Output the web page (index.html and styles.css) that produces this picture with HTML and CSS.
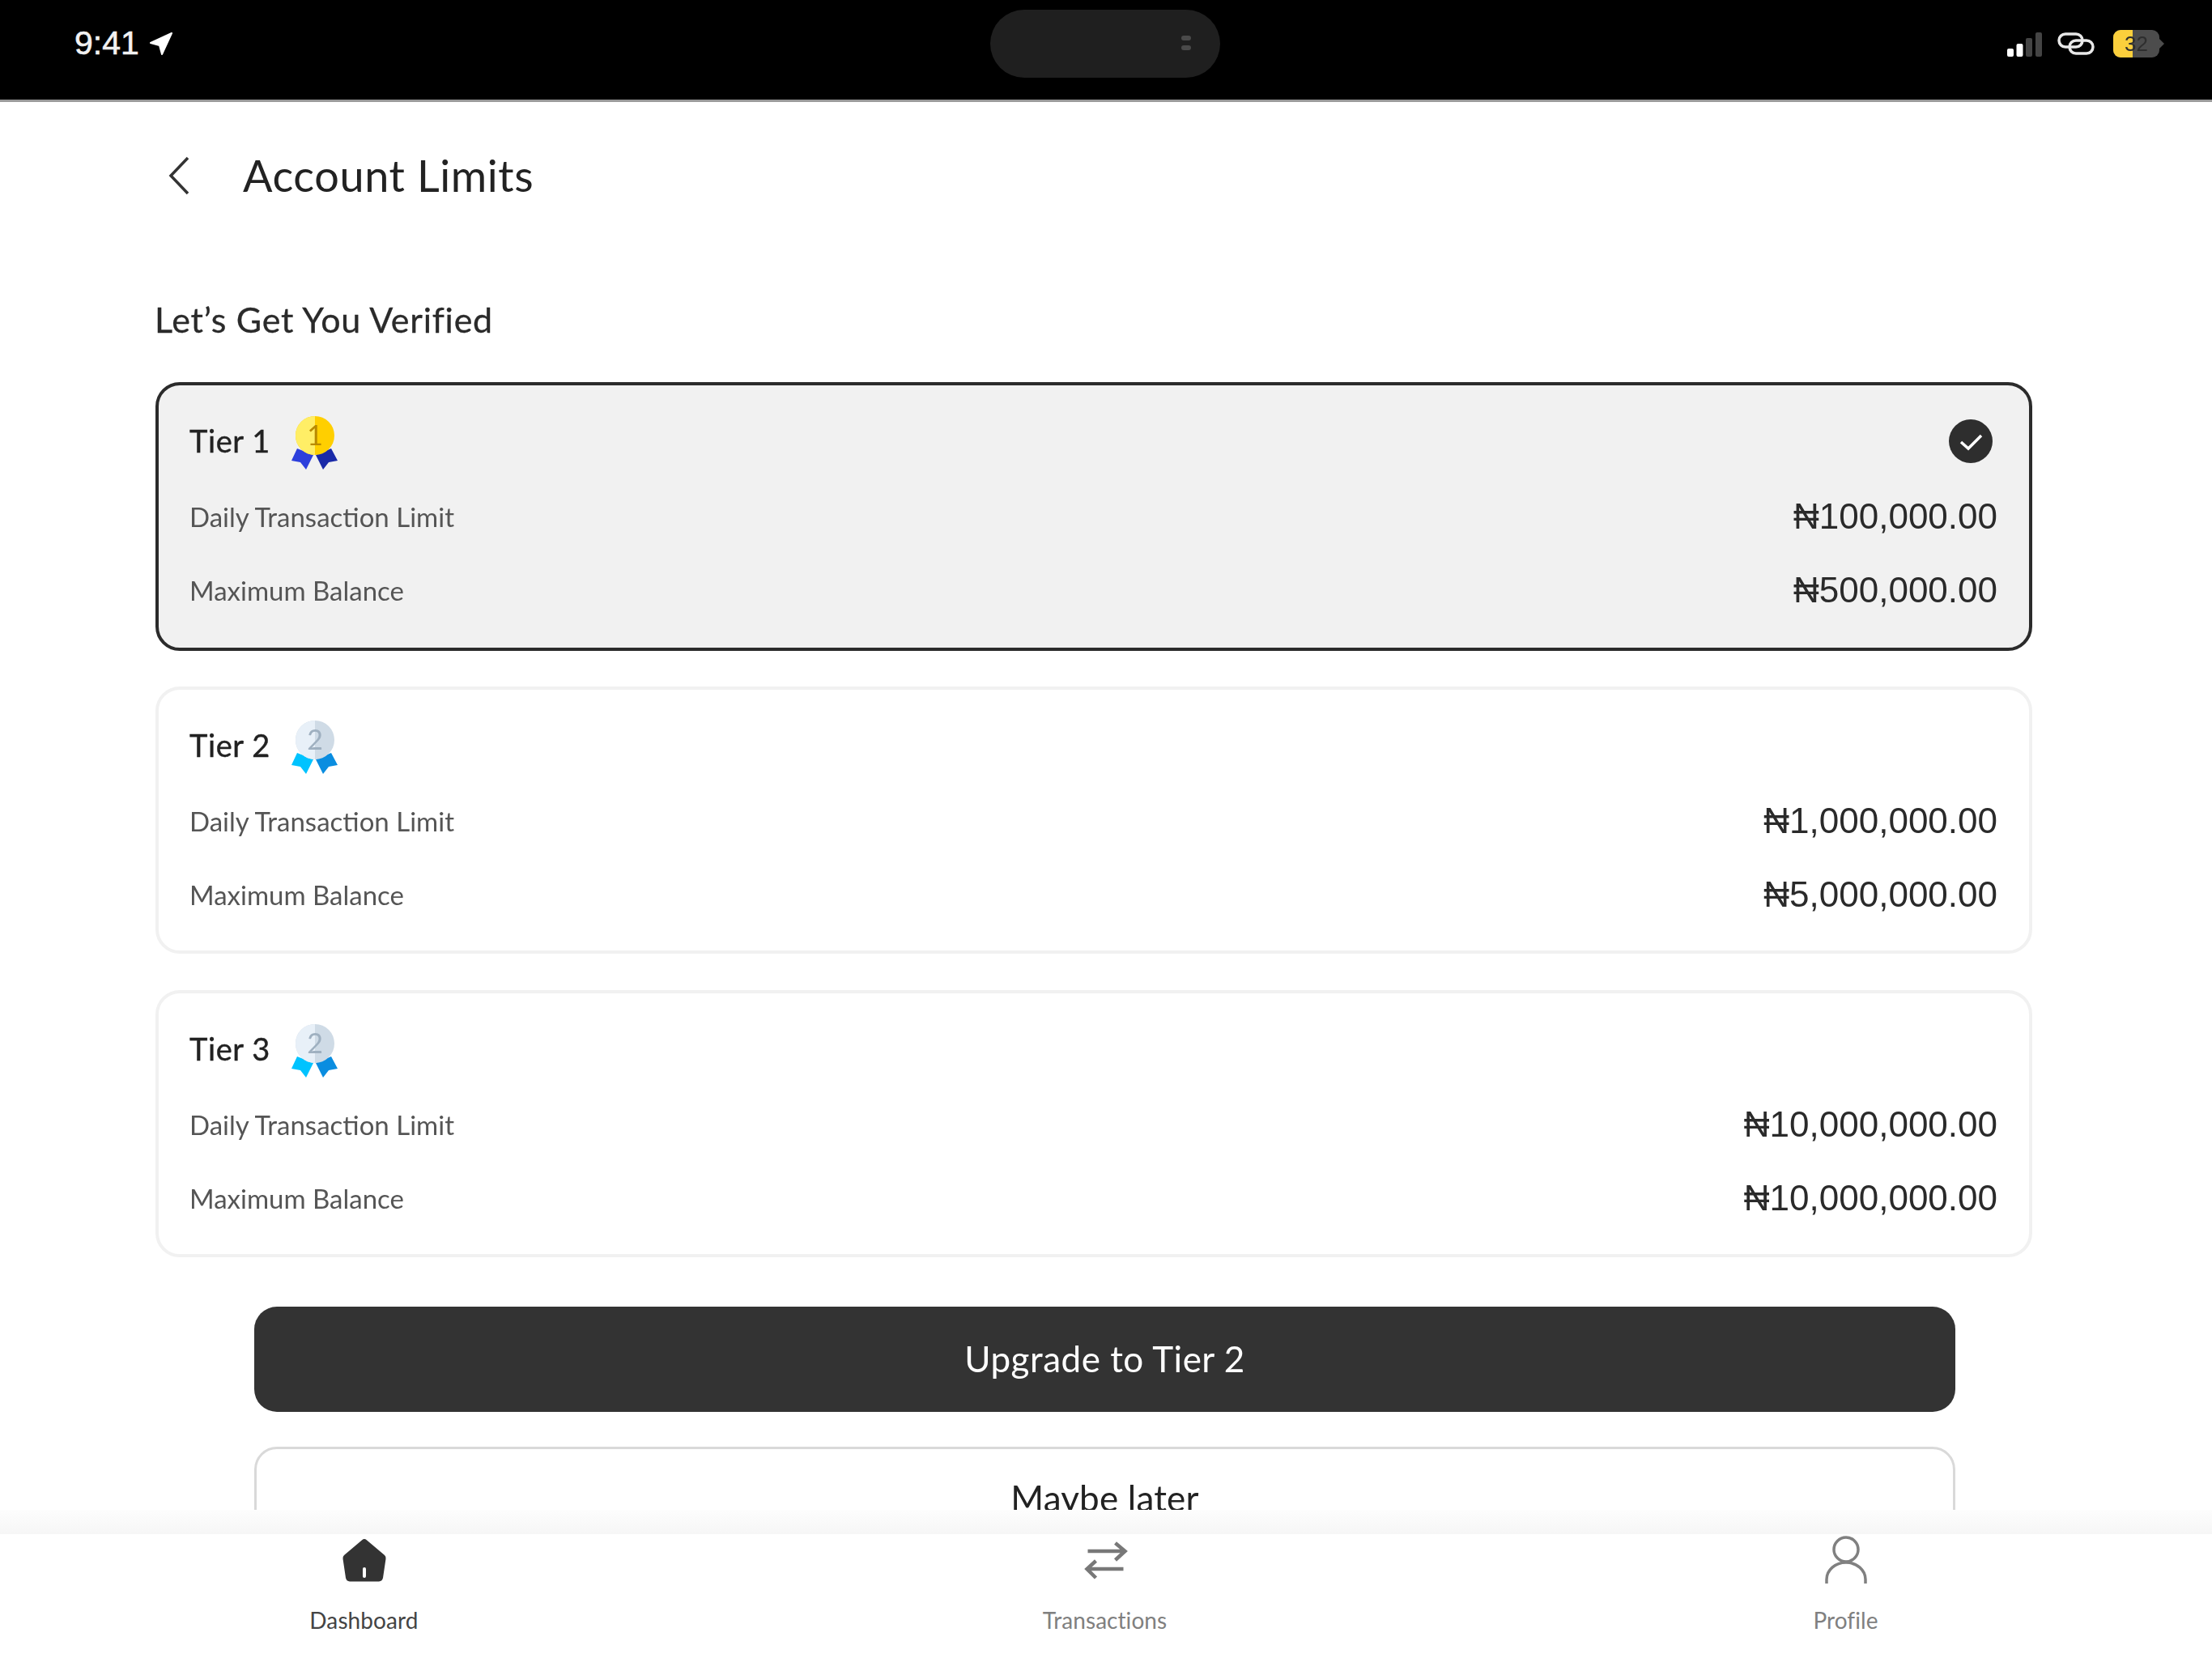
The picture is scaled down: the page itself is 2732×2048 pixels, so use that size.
FILE: index.html
```html
<!DOCTYPE html>
<html lang="en">
<head>
<meta charset="utf-8">
<title>Account Limits</title>
<link rel="stylesheet" href="styles.css">
</head>
<body>
<div class="status">
  <div class="status-left">
    <span class="time">9:41</span>
    <svg class="loc" viewBox="0 0 28 28"><path d="M27 1 1 13l11 3 3 11z" fill="#fff" stroke="#fff" stroke-width="2" stroke-linejoin="round"/></svg>
  </div>
  <div class="island"><i></i><i></i></div>
  <div class="status-right">
    <svg class="signal" viewBox="0 0 43 30"><rect x="0" y="20" width="8" height="10" rx="2" fill="#fff"/><rect x="11.500" y="14" width="8" height="16" rx="2" fill="#fff"/><rect x="23" y="7" width="8" height="23" rx="2" fill="#444"/><rect x="35" y="0" width="8" height="30" rx="2" fill="#444"/></svg>
    <svg class="link" viewBox="0 0 46 28"><g fill="none" stroke="#e8e8e8" stroke-width="3.500"><rect x="2" y="2" width="29" height="16" rx="8"/><rect x="15" y="10" width="29" height="16" rx="8"/></g></svg>
    <div class="battery"><div class="battery-body"><span class="battery-fill"></span><span class="battery-num">32</span></div><span class="battery-nub"></span></div>
  </div>
</div>

<main class="content">
  <header class="topbar">
    <svg class="back" viewBox="0 0 26 48"><path d="M24 2 3 24l21 22" fill="none" stroke="#333" stroke-width="3.500"/></svg>
    <h1 class="title">Account Limits</h1>
  </header>
  <h2 class="heading">Let’s Get You Verified</h2>

  <section class="card card-active">
    <div class="card-head">
      <span class="tier">Tier 1</span>
      <svg class="medal" viewBox="0 0 58 66"><path d="M7 40 0 55l11 2 7 9 9-18z" fill="#2c3fdc"/><path d="M49 40l8 15-11 2-7 9-9-18z" fill="#1a2aa8"/><circle cx="29" cy="24" r="24" fill="#ffcf00"/><path d="M29 0a24 24 0 0 0 0 48z" fill="#ffee66"/><text x="29" y="36" class="medal-num medal-num-gold">1</text></svg>
      <span class="check"><svg viewBox="0 0 54 54"><path d="M15 28l9 8 16-16" fill="none" stroke="#fff" stroke-width="3.500"/></svg></span>
    </div>
    <div class="row"><span class="label">Daily Transaction Limit</span><span class="value">₦100,000.00</span></div>
    <div class="row"><span class="label">Maximum Balance</span><span class="value">₦500,000.00</span></div>
  </section>

  <section class="card">
    <div class="card-head">
      <span class="tier">Tier 2</span>
      <svg class="medal" viewBox="0 0 58 66"><path d="M7 40 0 55l11 2 7 9 9-18z" fill="#00c3ff"/><path d="M49 40l8 15-11 2-7 9-9-18z" fill="#0a8de0"/><circle cx="29" cy="24" r="24" fill="#cfdbe6"/><path d="M29 0a24 24 0 0 0 0 48z" fill="#e8f0f8"/><text x="29" y="36" class="medal-num medal-num-silver">2</text></svg>
    </div>
    <div class="row"><span class="label">Daily Transaction Limit</span><span class="value">₦1,000,000.00</span></div>
    <div class="row"><span class="label">Maximum Balance</span><span class="value">₦5,000,000.00</span></div>
  </section>

  <section class="card">
    <div class="card-head">
      <span class="tier">Tier 3</span>
      <svg class="medal" viewBox="0 0 58 66"><path d="M7 40 0 55l11 2 7 9 9-18z" fill="#00c3ff"/><path d="M49 40l8 15-11 2-7 9-9-18z" fill="#0a8de0"/><circle cx="29" cy="24" r="24" fill="#cfdbe6"/><path d="M29 0a24 24 0 0 0 0 48z" fill="#e8f0f8"/><text x="29" y="36" class="medal-num medal-num-silver">2</text></svg>
    </div>
    <div class="row"><span class="label">Daily Transaction Limit</span><span class="value">₦10,000,000.00</span></div>
    <div class="row"><span class="label">Maximum Balance</span><span class="value">₦10,000,000.00</span></div>
  </section>

  <button class="btn btn-primary">Upgrade to Tier 2</button>
  <button class="btn btn-secondary">Maybe later</button>
</main>

<nav class="nav">
  <div class="nav-shade"></div>
  <div class="nav-items">
    <div class="nav-item nav-active">
      <svg class="nav-icon" viewBox="0 0 60 60"><path d="M30 4a4 4 0 0 0-2.500 1L5 24a5 5 0 0 0-1.500 4.500L7 52a5.500 5.500 0 0 0 5 4.500h36a5.500 5.500 0 0 0 5-4.500l3.500-23.500A5 5 0 0 0 55 24L32.500 5A4 4 0 0 0 30 4z" fill="#333"/><rect x="28" y="39" width="4" height="13" rx="2" fill="#fff"/></svg>
      <span class="nav-label">Dashboard</span>
    </div>
    <div class="nav-item">
      <svg class="nav-icon" viewBox="0 0 60 60"><g fill="none" stroke="#787878" stroke-width="4.500"><path d="M8.500 19h46M42.500 9l12 10-12 11"/><path d="M52.500 41h-45M18.500 31 7.500 41l11 11"/></g></svg>
      <span class="nav-label">Transactions</span>
    </div>
    <div class="nav-item">
      <svg class="nav-icon" viewBox="0 0 60 60"><g fill="none" stroke="#808080" stroke-width="3.500"><circle cx="30" cy="17" r="15"/><path d="M6 59V54a24 21 0 0 1 48 0v5"/></g></svg>
      <span class="nav-label">Profile</span>
    </div>
  </div>
</nav>
</body>
</html>
```
FILE: styles.css
```css
* { box-sizing: border-box; }
html, body { margin: 0; padding: 0; }
body {
  width: 2732px;
  height: 2048px;
  overflow: hidden;
  background: #fff;
  display: flex;
  flex-direction: column;
  font-family: "Lato", "Noto Sans", sans-serif;
  color: #222;
  filter: blur(0.6px);
}

.status {
  height: 126px;
  flex: none;
  background: #000;
  border-bottom: 3px solid #9a9a9a;
  display: grid;
  grid-template-columns: 1223px 284px 1fr;
}
.status-left { display: flex; align-items: flex-start; padding: 30px 0 0 92px; gap: 13px; }
.time { font: 41px/46px "Liberation Sans", sans-serif; color: #f2f2f2; -webkit-text-stroke: 0.6px #f2f2f2; }
.loc { width: 28px; height: 28px; margin-top: 10px; }
.island {
  margin-top: 12px;
  height: 84px;
  border-radius: 42px;
  background: #1f1f1f;
  display: flex;
  flex-direction: column;
  align-items: flex-end;
  gap: 6px;
  padding: 32px 36px 0 0;
}
.island i { width: 12px; height: 6px; border-radius: 3px; background: #4a4a4a; }
.status-right { display: flex; align-items: flex-start; justify-content: flex-end; padding: 37px 59px 0 0; }
.signal { width: 43px; height: 30px; margin-top: 3px; margin-right: 19px; }
.link { width: 46px; height: 28px; margin-top: 3px; margin-right: 23px; }
.battery { display: flex; align-items: center; height: 34px; }
.battery-body {
  width: 57px;
  height: 34px;
  border-radius: 9px;
  background: #4c4c4c;
  overflow: hidden;
  display: flex;
  align-items: center;
  justify-content: center;
  position: relative;
}
.battery-fill { position: absolute; left: 0; top: 0; bottom: 0; width: 24px; background: #fbcf3c; }
.battery-num { position: relative; font: 26px/34px "Liberation Sans", sans-serif; color: #2e2e2e; }
.battery-nub { width: 0; height: 0; border-left: 6px solid #4c4c4c; border-top: 6px solid transparent; border-bottom: 6px solid transparent; }

.content {
  flex: 1;
  min-height: 0;
  overflow: hidden;
  padding: 0 222px 0 192px;
  display: flex;
  flex-direction: column;
}
.topbar { display: flex; align-items: center; height: 182px; padding: 0 0 0 16px; flex: none; }
.back { width: 26px; height: 48px; margin-right: 66px; }
.title { margin: 0; font-size: 54px; font-weight: 400; color: #222; line-height: 60px; letter-spacing: 0.6px; }
.heading { margin: 0 0 52px -1px; font-size: 43px; font-weight: 400; line-height: 50px; color: #2a2a2a; padding-top: 62px; flex: none; letter-spacing: 0.75px; -webkit-text-stroke: 0.3px #2a2a2a; }

.card {
  flex: none;
  height: 330px;
  margin-bottom: 45px;
  border: 4px solid #f1f1f1;
  border-radius: 30px;
  background: #fff;
  padding: 41px 39px 0 38px;
  display: flex;
  flex-direction: column;
}
.card-active { height: 332px; margin-bottom: 44px; border: 4.500px solid #2b2b2b; background: #f1f1f1; }
.card-head { display: flex; align-items: center; height: 54px; margin-bottom: 21px; }
.tier { font-size: 38px; line-height: 46px; color: #222; letter-spacing: 0.6px; -webkit-text-stroke: 0.4px #222; }
.medal { width: 58px; height: 66px; margin: 5px 0 0 26px; }
.medal-num { font: 34px "Lato", sans-serif; text-anchor: middle; }
.medal-num-gold { fill: #b98a00; }
.medal-num-silver { fill: #9fb0c0; }
.check { margin-left: auto; width: 54px; height: 54px; border-radius: 50%; background: #2e2e2e; display: block; margin: 2px 6px 0 auto; }
.check svg { display: block; width: 54px; height: 54px; }
.row { display: flex; justify-content: space-between; align-items: center; height: 91px; flex: none; }
.label { font-size: 33px; color: #555; }
.value { font: 44px/50px "Liberation Sans", sans-serif; color: #2a2a2a; }

.btn { display: block; flex: none; width: 2101px; margin-left: 122px; font-family: inherit; border-radius: 28px; text-align: center; }
.btn-primary { height: 130px; margin-top: 16px; border: 0; background: #333; color: #fff; font-size: 44px; letter-spacing: 0.5px; padding: 0 0 3px; }
.btn-secondary { height: 130px; margin-top: 43px; border: 3px solid #d9d9d9; background: #fff; color: #222; font-size: 44px; letter-spacing: 0.2px; padding: 0 0 4px; }

.nav { flex: none; height: 183px; background: #fff; display: flex; flex-direction: column; overflow: hidden; }
.nav-shade { height: 30px; flex: none; background: linear-gradient(#fdfdfd, #f6f6f6); }
.nav-items { display: grid; grid-template-columns: repeat(3, 915px); margin-left: -8px; }
.nav-item { display: flex; flex-direction: column; align-items: center; }
.nav-icon { width: 60px; height: 60px; margin-top: 2px; display: block; }
.nav-label { font-size: 28px; line-height: 32px; margin-top: 28px; color: #808080; letter-spacing: 0.05px; }
.nav-active .nav-label { color: #444; letter-spacing: 0.1px; }
```
